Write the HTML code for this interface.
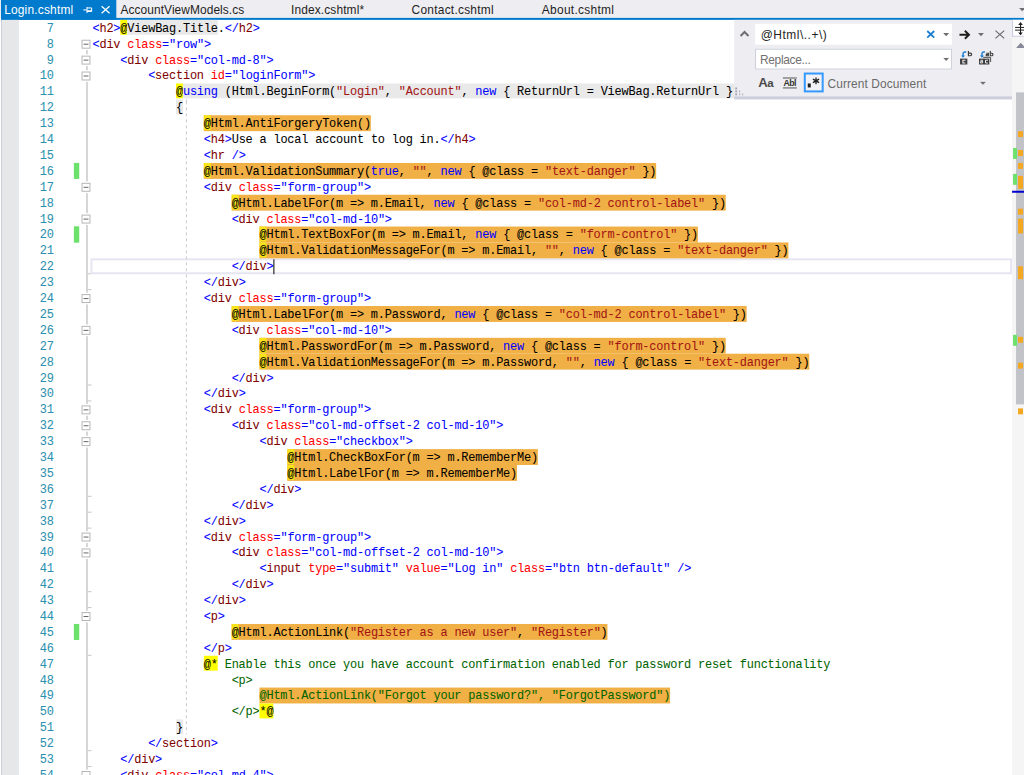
<!DOCTYPE html>
<html><head><meta charset="utf-8"><title>Login.cshtml</title>
<style>

html,body{margin:0;padding:0;background:#fff;}
body{width:1024px;height:775px;overflow:hidden;position:relative;font-family:"Liberation Sans",sans-serif;}
#root{position:absolute;left:0;top:0;width:1030px;height:780px;transform-origin:0 0;transform:scale(0.994175,0.993590);background:#fff;overflow:hidden;}
#root *{box-sizing:border-box;}
.abs{position:absolute;}
/* tab bar */
#tabs{position:absolute;left:0;top:0;width:1031px;height:18px;background:#EEEEF2;}
#tabline{position:absolute;left:1px;top:18px;width:1030px;height:2px;background:#007ACC;}
#acttab{position:absolute;left:1px;top:0;width:115.5px;height:19.5px;background:#007ACC;}
.tab{position:absolute;top:0.6px;height:18px;line-height:18px;font-size:12px;color:#1E1E1E;white-space:nowrap;transform-origin:0 50%;}
/* margins */
#lborder{position:absolute;left:1px;top:20px;width:1px;height:770px;background:#CCCEDB;}
#lmargin{position:absolute;left:2px;top:20px;width:17.1px;height:770px;background:#E6E7E8;}
/* code */
.ln{position:absolute;left:19px;width:35.00px;text-align:right;height:16.0px;line-height:18.5px;font-family:"Liberation Mono",monospace;font-size:12.0px;letter-spacing:-0.200px;color:#2B91AF;white-space:pre;}
.cl{position:absolute;height:16.0px;line-height:18.5px;font-family:"Liberation Mono",monospace;font-size:12.0px;letter-spacing:-0.200px;color:#000;white-space:pre;}
.cl,.ln{-webkit-text-stroke:0.05px currentColor;}
.cl i{font-style:normal;}
.cl b{font-weight:normal;display:inline-block;height:16.0px;vertical-align:top;}
.cl i.at{display:inline-block;height:15.3px;vertical-align:top;}
.hl .at{background:#F8E418;}
.d,.v,.k{color:#0000FF;}
.e{color:#800000;}
.a{color:#FF0000;}
.s{color:#A31515;}
.c{color:#006400;}
.at{background:#FFFF00;}
.hl{background:#F1B045;height:16.25px !important;}
.rz{background:#E9E9E9;height:15.3px !important;}
.rzl{padding-right:12px;}

.obox{position:absolute;left:82px;width:9px;height:9px;border:1px solid #B6B6B6;background:#fff;box-shadow:0 0 0 1.4px #fff;}
.obox s{position:absolute;left:1px;top:3px;width:5px;height:1px;background:#666;}

#find{position:absolute;left:0;top:0;transform:translate(738.5px,20px);width:279.5px;height:80.3px;background:#EEEEF2;border-bottom:3.6px solid #CCCEDB;}
#fin1{position:absolute;left:21.4px;top:4.2px;width:197.2px;height:20.8px;background:#fff;}
#fin2{position:absolute;left:21.4px;top:29.2px;width:197.2px;height:20.8px;background:#fff;border:1px solid #CCCEDB;}
.ft{position:absolute;white-space:nowrap;font-size:12px;line-height:20px;height:20px;color:#1E1E1E;}
#rxbtn{position:absolute;left:69.5px;top:53.1px;width:20.1px;height:19.9px;border:2px solid #3399FF;background:#F1F1F6;}

#sb{position:absolute;left:1018px;top:20px;width:14px;height:770px;background:#F5F5F5;}
#split{position:absolute;left:1018px;top:20px;width:14px;height:16.6px;background:#fff;border:1px solid #C9CBE0;border-top:none;}
</style></head><body><div id="root">
<div id="tabs"></div><div id="acttab"></div><div id="tabline"></div>
<div class="tab" id="t0" style="left:4.20px;color:#fff;letter-spacing:0.184px;">Login.cshtml</div>
<div class="tab" id="t1" style="left:121.19px;letter-spacing:0.069px;">AccountViewModels.cs</div>
<div class="tab" id="t2" style="left:292.82px;letter-spacing:0.114px;">Index.cshtml*</div>
<div class="tab" id="t3" style="left:414.00px;letter-spacing:0.242px;">Contact.cshtml</div>
<div class="tab" id="t4" style="left:544.99px;letter-spacing:0.285px;">About.cshtml</div>
<svg class="abs" style="left:83px;top:5px" width="11" height="10" viewBox="0 0 11 10"><g fill="none" stroke="#fff" stroke-width="1"><path d="M0.8 5.0H4.5"/><path d="M4.5 2.0V8.2" /><path d="M4.5 3.0H9.2V6.5H4.5" /><path d="M4.5 6.0H9.2" stroke-width="1.6"/></g></svg>
<svg class="abs" style="left:100.8px;top:5px" width="11" height="10" viewBox="0 0 11 10"><g fill="none" stroke="#fff" stroke-width="1.3"><path d="M1.2 1.3L9.2 8.3M9.2 1.3L1.2 8.3"/></g></svg>
<svg class="abs" style="left:1025.2px;top:8px" width="7" height="4" viewBox="0 0 7 4"><path d="M0 0H6.4L3.2 3.2Z" fill="#717171"/></svg>
<div id="lborder"></div><div id="lmargin"></div>
<div class="abs" style="left:87px;top:49.0px;width:1px;height:800.0px;background:#ADADAD"></div>
<div class="abs" style="left:88px;top:275.0px;width:3.5px;height:1px;background:#C6C6C6"></div>
<div class="abs" style="left:88px;top:291.0px;width:3.5px;height:1px;background:#C6C6C6"></div>
<div class="abs" style="left:88px;top:387.0px;width:3.5px;height:1px;background:#C6C6C6"></div>
<div class="abs" style="left:88px;top:403.0px;width:3.5px;height:1px;background:#C6C6C6"></div>
<div class="abs" style="left:88px;top:499.0px;width:3.5px;height:1px;background:#C6C6C6"></div>
<div class="abs" style="left:88px;top:515.0px;width:3.5px;height:1px;background:#C6C6C6"></div>
<div class="abs" style="left:88px;top:531.0px;width:3.5px;height:1px;background:#C6C6C6"></div>
<div class="abs" style="left:88px;top:595.0px;width:3.5px;height:1px;background:#C6C6C6"></div>
<div class="abs" style="left:88px;top:611.0px;width:3.5px;height:1px;background:#C6C6C6"></div>
<div class="abs" style="left:88px;top:659.0px;width:3.5px;height:1px;background:#C6C6C6"></div>
<div class="abs" style="left:88px;top:755.0px;width:3.5px;height:1px;background:#C6C6C6"></div>
<div class="abs" style="left:88px;top:771.0px;width:3.5px;height:1px;background:#C6C6C6"></div>
<div class="obox" style="top:40.0px"><s></s></div>
<div class="obox" style="top:56.0px"><s></s></div>
<div class="obox" style="top:72.0px"><s></s></div>
<div class="obox" style="top:184.0px"><s></s></div>
<div class="obox" style="top:216.0px"><s></s></div>
<div class="obox" style="top:296.0px"><s></s></div>
<div class="obox" style="top:328.0px"><s></s></div>
<div class="obox" style="top:408.0px"><s></s></div>
<div class="obox" style="top:424.0px"><s></s></div>
<div class="obox" style="top:440.0px"><s></s></div>
<div class="obox" style="top:536.0px"><s></s></div>
<div class="obox" style="top:552.0px"><s></s></div>
<div class="obox" style="top:616.0px"><s></s></div>
<div class="obox" style="top:776.0px"><s></s></div>
<div class="abs" style="left:0;transform:translateX(74.3px);top:164.0px;width:5px;height:16.0px;background:#6CE26C;box-shadow:0.4px 0 0 #6CE26C"></div>
<div class="abs" style="left:0;transform:translateX(74.3px);top:228.0px;width:5px;height:16.0px;background:#6CE26C;box-shadow:0.4px 0 0 #6CE26C"></div>
<div class="abs" style="left:0;transform:translateX(74.3px);top:628.0px;width:5px;height:16.0px;background:#6CE26C;box-shadow:0.4px 0 0 #6CE26C"></div>
<div class="abs" style="left:91px;top:260.0px;width:927px;height:16.0px;border:2px solid #E6E6F2;"></div><div class="abs" style="left:274.9px;top:260.5px;width:1px;height:15.0px;background:#000"></div>
<div class="ln" style="top:20.00px">7</div><div class="cl" style="top:20.00px;left:93.00px"><i class="d">&lt;</i><i class="e">h2</i><i class="d">&gt;</i><i class="at">@</i><b class="rz">ViewBag.Title</b>.<i class="d">&lt;/</i><i class="e">h2</i><i class="d">&gt;</i></div>
<div class="ln" style="top:36.00px">8</div><div class="cl" style="top:36.00px;left:93.00px"><i class="d">&lt;</i><i class="e">div</i> <i class="a">class</i><i class="d">=</i><i class="v">"row"</i><i class="d">&gt;</i></div>
<div class="ln" style="top:52.00px">9</div><div class="cl" style="top:52.00px;left:121.00px"><i class="d">&lt;</i><i class="e">div</i> <i class="a">class</i><i class="d">=</i><i class="v">"col-md-8"</i><i class="d">&gt;</i></div>
<div class="ln" style="top:68.00px">10</div><div class="cl" style="top:68.00px;left:149.00px"><i class="d">&lt;</i><i class="e">section</i> <i class="a">id</i><i class="d">=</i><i class="v">"loginForm"</i><i class="d">&gt;</i></div>
<div class="ln" style="top:84.00px">11</div><div class="cl" style="top:84.00px;left:177.00px"><i class="at">@</i><b class="rz rzl"><i class="k">using</i> (Html.BeginForm(<i class="s">"Login"</i>, <i class="s">"Account"</i>, <i class="k">new</i> { ReturnUrl = ViewBag.ReturnUrl }</b></div>
<div class="ln" style="top:100.00px">12</div><div class="cl" style="top:100.00px;left:177.00px"><b class="rz">{</b></div>
<div class="ln" style="top:116.00px">13</div><div class="cl" style="top:116.00px;left:205.00px"><b class="hl"><i class="at">@</i>Html.AntiForgeryToken()</b></div>
<div class="ln" style="top:132.00px">14</div><div class="cl" style="top:132.00px;left:205.00px"><i class="d">&lt;</i><i class="e">h4</i><i class="d">&gt;</i>Use a local account to log in.<i class="d">&lt;/</i><i class="e">h4</i><i class="d">&gt;</i></div>
<div class="ln" style="top:148.00px">15</div><div class="cl" style="top:148.00px;left:205.00px"><i class="d">&lt;</i><i class="e">hr</i><i class="d"> /&gt;</i></div>
<div class="ln" style="top:164.00px">16</div><div class="cl" style="top:164.00px;left:205.00px"><b class="hl"><i class="at">@</i>Html.ValidationSummary(<i class="k">true</i>, <i class="s">""</i>, <i class="k">new</i> { @class = <i class="s">"text-danger"</i> })</b></div>
<div class="ln" style="top:180.00px">17</div><div class="cl" style="top:180.00px;left:205.00px"><i class="d">&lt;</i><i class="e">div</i> <i class="a">class</i><i class="d">=</i><i class="v">"form-group"</i><i class="d">&gt;</i></div>
<div class="ln" style="top:196.00px">18</div><div class="cl" style="top:196.00px;left:233.00px"><b class="hl"><i class="at">@</i>Html.LabelFor(m =&gt; m.Email, <i class="k">new</i> { @class = <i class="s">"col-md-2 control-label"</i> })</b></div>
<div class="ln" style="top:212.00px">19</div><div class="cl" style="top:212.00px;left:233.00px"><i class="d">&lt;</i><i class="e">div</i> <i class="a">class</i><i class="d">=</i><i class="v">"col-md-10"</i><i class="d">&gt;</i></div>
<div class="ln" style="top:228.00px">20</div><div class="cl" style="top:228.00px;left:261.00px"><b class="hl"><i class="at">@</i>Html.TextBoxFor(m =&gt; m.Email, <i class="k">new</i> { @class = <i class="s">"form-control"</i> })</b></div>
<div class="ln" style="top:244.00px">21</div><div class="cl" style="top:244.00px;left:261.00px"><b class="hl"><i class="at">@</i>Html.ValidationMessageFor(m =&gt; m.Email, <i class="s">""</i>, <i class="k">new</i> { @class = <i class="s">"text-danger"</i> })</b></div>
<div class="ln" style="top:260.00px">22</div><div class="cl" style="top:260.00px;left:233.00px"><i class="d">&lt;/</i><i class="e">div</i><i class="d">&gt;</i></div>
<div class="ln" style="top:276.00px">23</div><div class="cl" style="top:276.00px;left:205.00px"><i class="d">&lt;/</i><i class="e">div</i><i class="d">&gt;</i></div>
<div class="ln" style="top:292.00px">24</div><div class="cl" style="top:292.00px;left:205.00px"><i class="d">&lt;</i><i class="e">div</i> <i class="a">class</i><i class="d">=</i><i class="v">"form-group"</i><i class="d">&gt;</i></div>
<div class="ln" style="top:308.00px">25</div><div class="cl" style="top:308.00px;left:233.00px"><b class="hl"><i class="at">@</i>Html.LabelFor(m =&gt; m.Password, <i class="k">new</i> { @class = <i class="s">"col-md-2 control-label"</i> })</b></div>
<div class="ln" style="top:324.00px">26</div><div class="cl" style="top:324.00px;left:233.00px"><i class="d">&lt;</i><i class="e">div</i> <i class="a">class</i><i class="d">=</i><i class="v">"col-md-10"</i><i class="d">&gt;</i></div>
<div class="ln" style="top:340.00px">27</div><div class="cl" style="top:340.00px;left:261.00px"><b class="hl"><i class="at">@</i>Html.PasswordFor(m =&gt; m.Password, <i class="k">new</i> { @class = <i class="s">"form-control"</i> })</b></div>
<div class="ln" style="top:356.00px">28</div><div class="cl" style="top:356.00px;left:261.00px"><b class="hl"><i class="at">@</i>Html.ValidationMessageFor(m =&gt; m.Password, <i class="s">""</i>, <i class="k">new</i> { @class = <i class="s">"text-danger"</i> })</b></div>
<div class="ln" style="top:372.00px">29</div><div class="cl" style="top:372.00px;left:233.00px"><i class="d">&lt;/</i><i class="e">div</i><i class="d">&gt;</i></div>
<div class="ln" style="top:388.00px">30</div><div class="cl" style="top:388.00px;left:205.00px"><i class="d">&lt;/</i><i class="e">div</i><i class="d">&gt;</i></div>
<div class="ln" style="top:404.00px">31</div><div class="cl" style="top:404.00px;left:205.00px"><i class="d">&lt;</i><i class="e">div</i> <i class="a">class</i><i class="d">=</i><i class="v">"form-group"</i><i class="d">&gt;</i></div>
<div class="ln" style="top:420.00px">32</div><div class="cl" style="top:420.00px;left:233.00px"><i class="d">&lt;</i><i class="e">div</i> <i class="a">class</i><i class="d">=</i><i class="v">"col-md-offset-2 col-md-10"</i><i class="d">&gt;</i></div>
<div class="ln" style="top:436.00px">33</div><div class="cl" style="top:436.00px;left:261.00px"><i class="d">&lt;</i><i class="e">div</i> <i class="a">class</i><i class="d">=</i><i class="v">"checkbox"</i><i class="d">&gt;</i></div>
<div class="ln" style="top:452.00px">34</div><div class="cl" style="top:452.00px;left:289.00px"><b class="hl"><i class="at">@</i>Html.CheckBoxFor(m =&gt; m.RememberMe)</b></div>
<div class="ln" style="top:468.00px">35</div><div class="cl" style="top:468.00px;left:289.00px"><b class="hl"><i class="at">@</i>Html.LabelFor(m =&gt; m.RememberMe)</b></div>
<div class="ln" style="top:484.00px">36</div><div class="cl" style="top:484.00px;left:261.00px"><i class="d">&lt;/</i><i class="e">div</i><i class="d">&gt;</i></div>
<div class="ln" style="top:500.00px">37</div><div class="cl" style="top:500.00px;left:233.00px"><i class="d">&lt;/</i><i class="e">div</i><i class="d">&gt;</i></div>
<div class="ln" style="top:516.00px">38</div><div class="cl" style="top:516.00px;left:205.00px"><i class="d">&lt;/</i><i class="e">div</i><i class="d">&gt;</i></div>
<div class="ln" style="top:532.00px">39</div><div class="cl" style="top:532.00px;left:205.00px"><i class="d">&lt;</i><i class="e">div</i> <i class="a">class</i><i class="d">=</i><i class="v">"form-group"</i><i class="d">&gt;</i></div>
<div class="ln" style="top:548.00px">40</div><div class="cl" style="top:548.00px;left:233.00px"><i class="d">&lt;</i><i class="e">div</i> <i class="a">class</i><i class="d">=</i><i class="v">"col-md-offset-2 col-md-10"</i><i class="d">&gt;</i></div>
<div class="ln" style="top:564.00px">41</div><div class="cl" style="top:564.00px;left:261.00px"><i class="d">&lt;</i><i class="e">input</i> <i class="a">type</i><i class="d">=</i><i class="v">"submit"</i> <i class="a">value</i><i class="d">=</i><i class="v">"Log in"</i> <i class="a">class</i><i class="d">=</i><i class="v">"btn btn-default"</i><i class="d"> /&gt;</i></div>
<div class="ln" style="top:580.00px">42</div><div class="cl" style="top:580.00px;left:233.00px"><i class="d">&lt;/</i><i class="e">div</i><i class="d">&gt;</i></div>
<div class="ln" style="top:596.00px">43</div><div class="cl" style="top:596.00px;left:205.00px"><i class="d">&lt;/</i><i class="e">div</i><i class="d">&gt;</i></div>
<div class="ln" style="top:612.00px">44</div><div class="cl" style="top:612.00px;left:205.00px"><i class="d">&lt;</i><i class="e">p</i><i class="d">&gt;</i></div>
<div class="ln" style="top:628.00px">45</div><div class="cl" style="top:628.00px;left:233.00px"><b class="hl"><i class="at">@</i>Html.ActionLink(<i class="s">"Register as a new user"</i>, <i class="s">"Register"</i>)</b></div>
<div class="ln" style="top:644.00px">46</div><div class="cl" style="top:644.00px;left:205.00px"><i class="d">&lt;/</i><i class="e">p</i><i class="d">&gt;</i></div>
<div class="ln" style="top:660.00px">47</div><div class="cl" style="top:660.00px;left:205.00px"><i class="at">@*</i><i class="c"> Enable this once you have account confirmation enabled for password reset functionality</i></div>
<div class="ln" style="top:676.00px">48</div><div class="cl" style="top:676.00px;left:233.00px"><i class="c">&lt;p&gt;</i></div>
<div class="ln" style="top:692.00px">49</div><div class="cl" style="top:692.00px;left:261.00px"><b class="hl"><i class="c">@Html.ActionLink("Forgot your password?", "ForgotPassword")</i></b></div>
<div class="ln" style="top:708.00px">50</div><div class="cl" style="top:708.00px;left:233.00px"><i class="c">&lt;/p&gt;</i><i class="at">*@</i></div>
<div class="ln" style="top:724.00px">51</div><div class="cl" style="top:724.00px;left:177.00px"><b class="rz">}</b></div>
<div class="ln" style="top:740.00px">52</div><div class="cl" style="top:740.00px;left:149.00px"><i class="d">&lt;/</i><i class="e">section</i><i class="d">&gt;</i></div>
<div class="ln" style="top:756.00px">53</div><div class="cl" style="top:756.00px;left:121.00px"><i class="d">&lt;/</i><i class="e">div</i><i class="d">&gt;</i></div>
<div class="ln" style="top:772.00px">54</div><div class="cl" style="top:772.00px;left:121.00px"><i class="d">&lt;</i><i class="e">div</i> <i class="a">class</i><i class="d">=</i><i class="v">"col-md-4"</i><i class="d">&gt;</i></div>
<div class="abs" style="left:187px;top:100.0px;width:1px;height:639.0px;background:repeating-linear-gradient(to bottom,#C9C9C9 0,#C9C9C9 3px,transparent 3px,transparent 6px);background-position:0 2px;"></div>
<div id="find">
<div class="abs" style="left:1.4px;top:68.0px;width:1.6px;height:1.6px;background:#A9A9B6"></div>
<div class="abs" style="left:1.4px;top:71.0px;width:1.6px;height:1.6px;background:#A9A9B6"></div>
<div class="abs" style="left:4.5px;top:71.0px;width:1.6px;height:1.6px;background:#A9A9B6"></div>
<div class="abs" style="left:1.4px;top:74.0px;width:1.6px;height:1.6px;background:#A9A9B6"></div>
<div class="abs" style="left:4.5px;top:74.0px;width:1.6px;height:1.6px;background:#A9A9B6"></div>
<div class="abs" style="left:7.6px;top:74.0px;width:1.6px;height:1.6px;background:#A9A9B6"></div>
<svg class="abs" style="left:5.2px;top:10.2px" width="11" height="8" viewBox="0 0 11 8"><path d="M1.4 6.2L5.4 2.2L9.4 6.2" fill="none" stroke="#6E6E6E" stroke-width="2"/></svg>
<div id="fin1"></div><div id="fin2"></div>
<div class="ft" id="f_find" style="left:26.60px;top:4.6px;letter-spacing:0.531px;">@Html\..+\)</div>
<div class="ft" id="f_repl" style="left:25.99px;top:29.6px;color:#717171;letter-spacing:-0.339px;">Replace...</div>
<svg class="abs" style="left:193.2px;top:10.1px" width="10" height="10" viewBox="0 0 10 10"><path d="M1.2 1.2L8.2 7.8M8.2 1.2L1.2 7.8" fill="none" stroke="#1C7CD0" stroke-width="1.8"/></svg>
<svg class="abs" style="left:209.6px;top:13.0px" width="7" height="4" viewBox="0 0 7 4"><path d="M0.2 0.2H6.2L3.2 3.4Z" fill="#6E6E6E"/></svg>
<svg class="abs" style="left:209.6px;top:38.0px" width="7" height="4" viewBox="0 0 7 4"><path d="M0.2 0.2H6.2L3.2 3.4Z" fill="#6E6E6E"/></svg>
<svg class="abs" style="left:245.4px;top:13.0px" width="7" height="4" viewBox="0 0 7 4"><path d="M0.2 0.2H6.2L3.2 3.4Z" fill="#6E6E6E"/></svg>
<svg class="abs" style="left:246.8px;top:62.0px" width="7" height="4" viewBox="0 0 7 4"><path d="M0.2 0.2H6.2L3.2 3.4Z" fill="#6E6E6E"/></svg>
<svg class="abs" style="left:226px;top:10px" width="12" height="10" viewBox="0 0 12 10"><path d="M0.6 5H10M6 1L10.2 5L6 9" fill="none" stroke="#1E1E1E" stroke-width="1.9"/></svg>
<svg class="abs" style="left:262px;top:9.8px" width="11" height="10" viewBox="0 0 11 10"><path d="M0.8 0.8L9.6 8.6M9.6 0.8L0.8 8.6" fill="none" stroke="#6A6A6A" stroke-width="1.2"/></svg>
<svg class="abs" style="left:226.5px;top:31.2px" width="14" height="15" viewBox="0 0 14 15"><path d="M3.2 6.2V3.4Q3.2 1.4 5.2 1.4H6.4" fill="none" stroke="#1C7CD0" stroke-width="1.4"/><path d="M1.2 4.8H5.2L3.2 7Z" fill="#1C7CD0"/><rect x="0.2" y="8" width="7.3" height="5.9" fill="#3C3C3C"/><path d="M5.6 9.6H3V12.4H5.6" fill="none" stroke="#EEEEF2" stroke-width="1.1"/><path d="M8.6 0.2V5.1H10.6Q11.8 5.1 11.8 3.7Q11.8 2.4 10.6 2.4H8.6" fill="none" stroke="#3C3C3C" stroke-width="1.2"/></svg>
<svg class="abs" style="left:245.5px;top:31.2px" width="16" height="15" viewBox="0 0 16 15"><path d="M3.2 6.2V3.4Q3.2 1.4 5.2 1.4H6.2" fill="none" stroke="#1C7CD0" stroke-width="1.4"/><path d="M1.2 4.8H5.2L3.2 7Z" fill="#1C7CD0"/><path d="M4.4 6.7H11.9V11.4" fill="none" stroke="#3C3C3C" stroke-width="0.9"/><rect x="0.2" y="8" width="10.4" height="5.9" fill="#3C3C3C"/><path d="M1.6 9.6H3.8V12.4H1.6V11H3.8" fill="none" stroke="#EEEEF2" stroke-width="0.9"/><path d="M9.2 9.6H6.8V12.4H9.2" fill="none" stroke="#EEEEF2" stroke-width="1"/><path d="M7.5 2.5H9.7V5.1H7.5V3.8H9.7" fill="none" stroke="#3C3C3C" stroke-width="1.05"/><path d="M11.6 0.2V5.1H13.2Q14.2 5.1 14.2 3.8Q14.2 2.6 13.2 2.6H11.6" fill="none" stroke="#3C3C3C" stroke-width="1.1"/></svg>
<div class="abs" id="f_aa" style="left:24.2px;top:55px;font-size:13.2px;font-weight:bold;line-height:18px;color:#4A4A4A;letter-spacing:-0.5px;white-space:nowrap;">A<span style="font-size:11.6px">a</span></div>
<div class="abs" style="left:49.2px;top:58.2px;width:13.4px;height:10.8px;border-top:1.1px solid #555;border-bottom:1.1px solid #555;"></div>
<div class="abs" id="f_abl" style="left:49.6px;top:59.3px;font-size:8.8px;line-height:10px;color:#333;font-weight:bold;letter-spacing:-0.6px;white-space:nowrap;">Abl</div>
<div id="rxbtn"></div>
<div class="abs" style="left:73.8px;top:64.2px;width:3.6px;height:3.6px;background:#1E1E1E"></div>
<svg class="abs" style="left:77.6px;top:57.4px" width="9" height="9" viewBox="0 0 9 9"><path d="M4.3 0.9V7.9M1.2 2.6L7.4 6.2M7.4 2.6L1.2 6.2" fill="none" stroke="#1E1E1E" stroke-width="1.3"/></svg>
<div class="ft" id="f_cur" style="left:93.80px;top:54.8px;color:#6A6A6A;letter-spacing:0.090px;">Current Document</div>
</div>
<div id="sb"></div><div id="split"></div>
<svg class="abs" style="left:1020px;top:21px" width="13" height="15" viewBox="0 0 13 15"><g fill="none" stroke="#1E1E1E"><path d="M1 6.6H13M1 9.3H13" stroke-width="1"/><path d="M6.5 2.4V13.6" stroke-width="1.1"/></g><path d="M4.2 4.2L6.5 1.2L8.8 4.2ZM4.2 11.6L6.5 14.6L8.8 11.6Z" fill="#1E1E1E"/></svg>
<svg class="abs" style="left:1021.8px;top:42.9px" width="10" height="6" viewBox="0 0 10 6"><path d="M0 5.2L4.7 0L9.4 5.2Z" fill="#868999"/></svg>
<div class="abs" style="left:1022.2px;top:93.0px;width:10px;height:313.5px;background:#C2C3C9"></div>
<div class="abs" style="left:1023.9px;top:131.9px;width:5.2px;height:5.9px;background:#F4A721"></div>
<div class="abs" style="left:1023.9px;top:150.9px;width:5.2px;height:6.0px;background:#F4A721"></div>
<div class="abs" style="left:1023.9px;top:163.9px;width:5.2px;height:5.9px;background:#F4A721"></div>
<div class="abs" style="left:1023.9px;top:176.8px;width:5.2px;height:13.0px;background:#F4A721"></div>
<div class="abs" style="left:1023.9px;top:210.1px;width:5.2px;height:5.9px;background:#F4A721"></div>
<div class="abs" style="left:1023.9px;top:220.0px;width:5.2px;height:14.7px;background:#F4A721"></div>
<div class="abs" style="left:1023.9px;top:267.7px;width:5.2px;height:12.9px;background:#F4A721"></div>
<div class="abs" style="left:1023.9px;top:339.1px;width:5.2px;height:5.9px;background:#F4A721"></div>
<div class="abs" style="left:1023.9px;top:364.9px;width:5.2px;height:6.0px;background:#F4A721"></div>
<div class="abs" style="left:1023.9px;top:410.9px;width:5.2px;height:5.9px;background:#F4A721"></div>
<div class="abs" style="left:1019.0px;top:148.9px;width:4.0px;height:11.2px;background:#6CE26C"></div>
<div class="abs" style="left:1019.0px;top:175.0px;width:4.0px;height:11.0px;background:#6CE26C"></div>
<div class="abs" style="left:1019.0px;top:337.0px;width:4.0px;height:11.2px;background:#6CE26C"></div>
<div class="abs" style="left:1017.9px;top:191.9px;width:14px;height:2.4px;background:#0000CD"></div>
</div></body></html>
